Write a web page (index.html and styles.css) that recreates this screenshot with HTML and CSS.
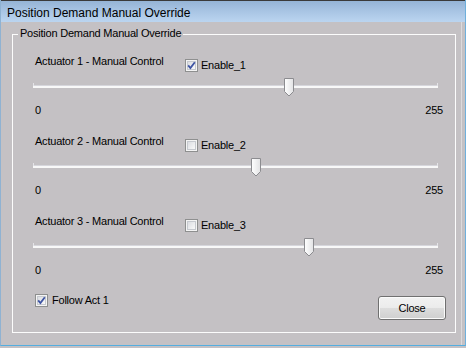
FILE: index.html
```html
<!DOCTYPE html>
<html>
<head>
<meta charset="utf-8">
<link rel="stylesheet" href="styles.css">
</head>
<body>
<div class="window">
  <div class="titlebar"><span class="title">Position Demand Manual Override</span></div>
  <div class="client">
    <div class="group">
      <span class="legend">Position Demand Manual Override</span>

      <div class="act">
        <div class="act-head">
          <span class="act-label">Actuator 1 - Manual Control</span>
          <label class="check">
            <svg class="box" width="13" height="13" viewBox="0 0 13 13"><defs><linearGradient id="g1" x1="0" y1="0" x2="1" y2="1"><stop offset="0" stop-color="#d9dbe0"/><stop offset="1" stop-color="#fbfbfb"/></linearGradient></defs><rect x="0.5" y="0.5" width="12" height="12" fill="#f4f4f4" stroke="#8e8f8f"/><rect x="2.5" y="2.5" width="8" height="8" fill="url(#g1)" stroke="#c6c9cf"/><path d="M3.2 6.4 L5.4 9 L9.8 3.2" fill="none" stroke="#3e54a3" stroke-width="1.8"/></svg>
            <span>Enable_1</span>
          </label>
        </div>
        <div class="slider">
          <div class="track"></div>
          <svg class="thumb" style="left:251px" width="10" height="19" viewBox="0 0 10 19"><defs><linearGradient id="t1" x1="0" y1="0" x2="1" y2="0"><stop offset="0" stop-color="#ffffff"/><stop offset="1" stop-color="#e2e2e4"/></linearGradient></defs><path d="M0.5 0.5 H9.5 V13.5 L5 18 L0.5 13.5 Z" fill="url(#t1)" stroke="#8c8c90"/></svg>
        </div>
        <div class="scale"><span>0</span><span>255</span></div>
      </div>

      <div class="act">
        <div class="act-head">
          <span class="act-label">Actuator 2 - Manual Control</span>
          <label class="check">
            <svg class="box" width="13" height="13" viewBox="0 0 13 13"><rect x="0.5" y="0.5" width="12" height="12" fill="#f4f4f4" stroke="#8e8f8f"/><rect x="2.5" y="2.5" width="8" height="8" fill="url(#g1)" stroke="#c6c9cf"/></svg>
            <span>Enable_2</span>
          </label>
        </div>
        <div class="slider">
          <div class="track"></div>
          <svg class="thumb" style="left:218px" width="10" height="19" viewBox="0 0 10 19"><path d="M0.5 0.5 H9.5 V13.5 L5 18 L0.5 13.5 Z" fill="url(#t1)" stroke="#8c8c90"/></svg>
        </div>
        <div class="scale"><span>0</span><span>255</span></div>
      </div>

      <div class="act">
        <div class="act-head">
          <span class="act-label">Actuator 3 - Manual Control</span>
          <label class="check">
            <svg class="box" width="13" height="13" viewBox="0 0 13 13"><rect x="0.5" y="0.5" width="12" height="12" fill="#f4f4f4" stroke="#8e8f8f"/><rect x="2.5" y="2.5" width="8" height="8" fill="url(#g1)" stroke="#c6c9cf"/></svg>
            <span>Enable_3</span>
          </label>
        </div>
        <div class="slider">
          <div class="track"></div>
          <svg class="thumb" style="left:271px" width="10" height="19" viewBox="0 0 10 19"><path d="M0.5 0.5 H9.5 V13.5 L5 18 L0.5 13.5 Z" fill="url(#t1)" stroke="#8c8c90"/></svg>
        </div>
        <div class="scale"><span>0</span><span>255</span></div>
      </div>

      <div class="footer">
        <label class="check follow">
          <svg class="box" width="13" height="13" viewBox="0 0 13 13"><rect x="0.5" y="0.5" width="12" height="12" fill="#f4f4f4" stroke="#8e8f8f"/><rect x="2.5" y="2.5" width="8" height="8" fill="url(#g1)" stroke="#c6c9cf"/><path d="M3.2 6.4 L5.4 9 L9.8 3.2" fill="none" stroke="#3e54a3" stroke-width="1.8"/></svg>
          <span>Follow Act 1</span>
        </label>
        <button class="btn">Close</button>
      </div>
    </div>
  </div>
</div>
</body>
</html>
```

FILE: styles.css
```css
html, body {
  margin: 0;
  padding: 0;
  background: #c4c1c4;
}
body {
  font-family: "Liberation Sans", Arial, sans-serif;
  font-size: 11px;
  line-height: 13px;
  color: #000;
}
.window {
  width: 466px;
  height: 346px;
  box-sizing: border-box;
  border-left: 1px solid #8fb2d2;
  border-right: 1px solid #6fb0dc;
  border-bottom: 1px solid #54aee0;
  background: #c4c1c4;
  display: flex;
  flex-direction: column;
  box-shadow: inset -3px 0 0 #c4c1c4, inset -4px 0 0 #dcdadc;
}
.titlebar {
  height: 22px;
  box-sizing: border-box;
  border-top: 1px solid #3a3a3a;
  background: linear-gradient(#95b4d6, #a9c5e4 50%, #bbd5f0);
  padding-left: 6px;
  display: flex;
  align-items: flex-start;
}
.title {
  font-size: 12px;
  line-height: 14px;
  margin-top: 5px;
  color: #000;
}
.client {
  flex: 1;
  padding: 12px 0 0 11px;
}
.group {
  position: relative;
  width: 444px;
  height: 299px;
  box-sizing: border-box;
  border: 1px solid #fcfcfc;
  padding: 20px 12px 0 22px;
  display: flex;
  flex-direction: column;
  letter-spacing: -0.22px;
}
.legend {
  position: absolute;
  left: 5px;
  top: -8px;
  padding: 0 2px;
  background: #c4c1c4;
}
.act {
  display: grid;
  grid-template-rows: 19px 26px 17px;
  margin-bottom: 18px;
}
.act-head {
  display: flex;
  align-items: flex-start;
}
.act-label {
  width: 150px;
}
.check {
  display: flex;
  align-items: center;
  gap: 3px;
  margin-top: 4px;
}
.box {
  display: block;
  flex: none;
}
.slider {
  position: relative;
  margin: 0 5px 0 -2px;
}
.track {
  position: absolute;
  left: 0;
  right: 0;
  top: 11px;
  height: 2px;
  border-top: 1px solid #d6d6dc;
  background: #f8f8f8;
}
.track::before, .track::after {
  content: "";
  position: absolute;
  top: -3px;
  width: 1px;
  height: 3px;
  background: #e4e4e8;
}
.track::before { left: 0; }
.track::after { right: 0; }
.thumb {
  position: absolute;
  top: 4px;
  display: block;
}
.scale {
  display: flex;
  justify-content: space-between;
  padding-top: 4px;
}
.footer {
  display: flex;
  align-items: flex-start;
  margin-top: -1px;
}
.follow {
  margin-top: 0;
  gap: 4px;
}
.btn {
  margin: 2px -3px 0 auto;
  width: 68px;
  height: 24px;
  box-sizing: border-box;
  border: 1px solid #707070;
  border-radius: 3px;
  box-shadow: inset 0 0 0 1px #fbfbfb;
  background: linear-gradient(#f2f2f2, #ebebeb 50%, #dddddd 51%, #cfcfcf);
  font-family: "Liberation Sans", Arial, sans-serif;
  font-size: 11px;
  letter-spacing: -0.22px;
  color: #000;
  padding: 0;
}
```
